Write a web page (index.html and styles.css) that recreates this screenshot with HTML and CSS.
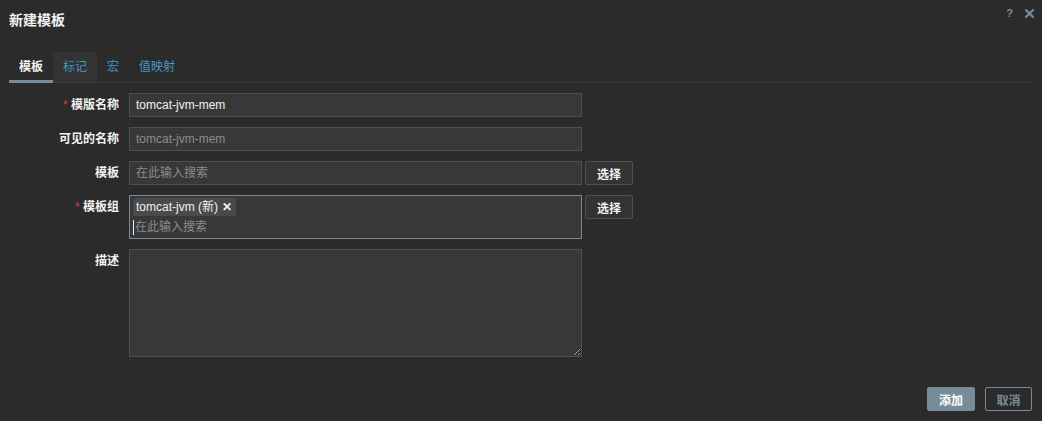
FILE: index.html
```html
<!DOCTYPE html>
<html lang="zh">
<head>
<meta charset="utf-8">
<title>新建模板</title>
<link rel="stylesheet" href="styles.css">
</head>
<body>
<div class="dialog">
  <div class="header">
    <h4 class="title">新建模板</h4>
    <div class="header-tools">
      <span class="help">?</span>
      <svg class="close" width="11" height="11" viewBox="0 0 11 11"><path d="M1.5 1.5 L9.5 9.5 M9.5 1.5 L1.5 9.5" stroke="#768d99" stroke-width="2.2" fill="none"/></svg>
    </div>
  </div>
  <ul class="tabs">
    <li class="tab active">模板</li>
    <li class="tab hover">标记</li>
    <li class="tab">宏</li>
    <li class="tab">值映射</li>
  </ul>
  <div class="form">
    <div class="row">
      <label class="label"><span class="req">*</span> 模版名称</label>
      <div class="field"><input class="input" type="text" value="tomcat-jvm-mem"></div>
    </div>
    <div class="row">
      <label class="label">可见的名称</label>
      <div class="field"><input class="input" type="text" placeholder="tomcat-jvm-mem"></div>
    </div>
    <div class="row">
      <label class="label">模板</label>
      <div class="field">
        <div class="input ms-plain">在此输入搜索</div>
        <button class="btn-select">选择</button>
      </div>
    </div>
    <div class="row">
      <label class="label"><span class="req">*</span> 模板组</label>
      <div class="field">
        <div class="multiselect">
          <span class="tag">tomcat-jvm (新) <span class="tag-x">✕</span></span>
          <div class="ms-search"><span class="caret"></span>在此输入搜索</div>
        </div>
        <button class="btn-select">选择</button>
      </div>
    </div>
    <div class="row">
      <label class="label">描述</label>
      <div class="field"><textarea class="textarea"></textarea></div>
    </div>
  </div>
  <div class="footer">
    <button class="btn-primary">添加</button>
    <button class="btn-alt">取消</button>
  </div>
</div>
</body>
</html>
```
FILE: styles.css
```css
html, body {
  margin: 0;
  padding: 0;
  background: #2b2b2b;
}
body {
  font-family: "Liberation Sans", Arial, "Noto Sans CJK SC", sans-serif;
  font-size: 12px;
  color: #f2f2f2;
}
.dialog {
  padding: 0 10px 0 9px;
  height: 421px;
  box-sizing: border-box;
}
.header {
  display: flex;
  justify-content: space-between;
  height: 40px;
}
.title {
  margin: 0;
  font-size: 14px;
  font-weight: bold;
  line-height: 40px;
  color: #f2f2f2;
}
.header-tools {
  display: flex;
  align-items: center;
  gap: 11px;
  height: 26px;
  margin-right: -3px;
}
.help {
  color: #768d99;
  font-weight: bold;
  font-size: 11px;
}
.close {
  display: block;
}
.tabs {
  list-style: none;
  margin: 12px 0 0;
  padding: 0;
  display: flex;
  border-bottom: 1px solid #383838;
  height: 30px;
}
.tab {
  height: 28px;
  line-height: 30px;
  padding: 0 10px;
  color: #4796c4;
  border-bottom: 3px solid transparent;
}
.tab.active {
  color: #f2f2f2;
  font-weight: bold;
  border-bottom-color: #768d99;
}
.tab.hover {
  background: #333333;
  border-bottom: 0;
  height: 30px;
}
.form {
  margin-top: 10px;
  display: flex;
  flex-direction: column;
  gap: 10px;
}
.row {
  display: flex;
  gap: 10px;
}
.label {
  width: 110px;
  flex: none;
  text-align: right;
  line-height: 24px;
  font-weight: bold;
  color: #f2f2f2;
}
.req {
  color: #e33734;
  font-weight: normal;
}
.field {
  display: flex;
  gap: 3px;
  align-items: flex-start;
}
.input {
  box-sizing: border-box;
  width: 453px;
  height: 24px;
  margin: 0;
  padding: 0 6px;
  background: #383838;
  border: 1px solid #4f4f4f;
  color: #f2f2f2;
  font-family: "Liberation Sans", Arial, "Noto Sans CJK SC", sans-serif;
  font-size: 12px;
  outline: none;
}
.input::placeholder {
  color: #8c8c8c;
}
.ms-plain {
  line-height: 22px;
  color: #8c8c8c;
}
.btn-select {
  box-sizing: border-box;
  width: 48px;
  height: 24px;
  margin: 0;
  padding: 0;
  background: #333333;
  border: 1px solid #4f4f4f;
  border-radius: 2px;
  color: #f2f2f2;
  font-family: "Liberation Sans", Arial, "Noto Sans CJK SC", sans-serif;
  font-size: 12px;
  font-weight: bold;
}
.multiselect {
  box-sizing: border-box;
  width: 453px;
  height: 44px;
  background: #383838;
  border: 1px solid #768d99;
  padding: 2px 3px 0;
}
.tag {
  display: inline-block;
  height: 18px;
  line-height: 18px;
  padding: 0 4px 0 3px;
  background: #4a4a4a;
  border-radius: 2px;
  color: #f2f2f2;
}
.tag-x {
  font-weight: bold;
  margin-left: 1px;
}
.ms-search {
  margin-top: 2px;
  height: 18px;
  line-height: 18px;
  color: #8c8c8c;
  display: flex;
  align-items: center;
}
.caret {
  display: inline-block;
  width: 1px;
  height: 15px;
  background: #f2f2f2;
  margin-right: 1px;
}
.textarea {
  box-sizing: border-box;
  width: 453px;
  height: 108px;
  margin: 0;
  background: #383838;
  border: 1px solid #4f4f4f;
  color: #f2f2f2;
  display: block;
  outline: none;
}
.footer {
  display: flex;
  justify-content: flex-end;
  gap: 10px;
  margin-top: 30px;
}
.btn-primary, .btn-alt {
  box-sizing: border-box;
  width: 48px;
  height: 24px;
  margin: 0;
  padding: 0;
  border-radius: 2px;
  font-family: "Liberation Sans", Arial, "Noto Sans CJK SC", sans-serif;
  font-size: 12px;
  font-weight: bold;
}
.btn-primary {
  background: #768d99;
  border: 1px solid #768d99;
  color: #ffffff;
}
.btn-alt {
  width: 47px;
  background: transparent;
  border: 1px solid #768d99;
  color: #768d99;
}
```
